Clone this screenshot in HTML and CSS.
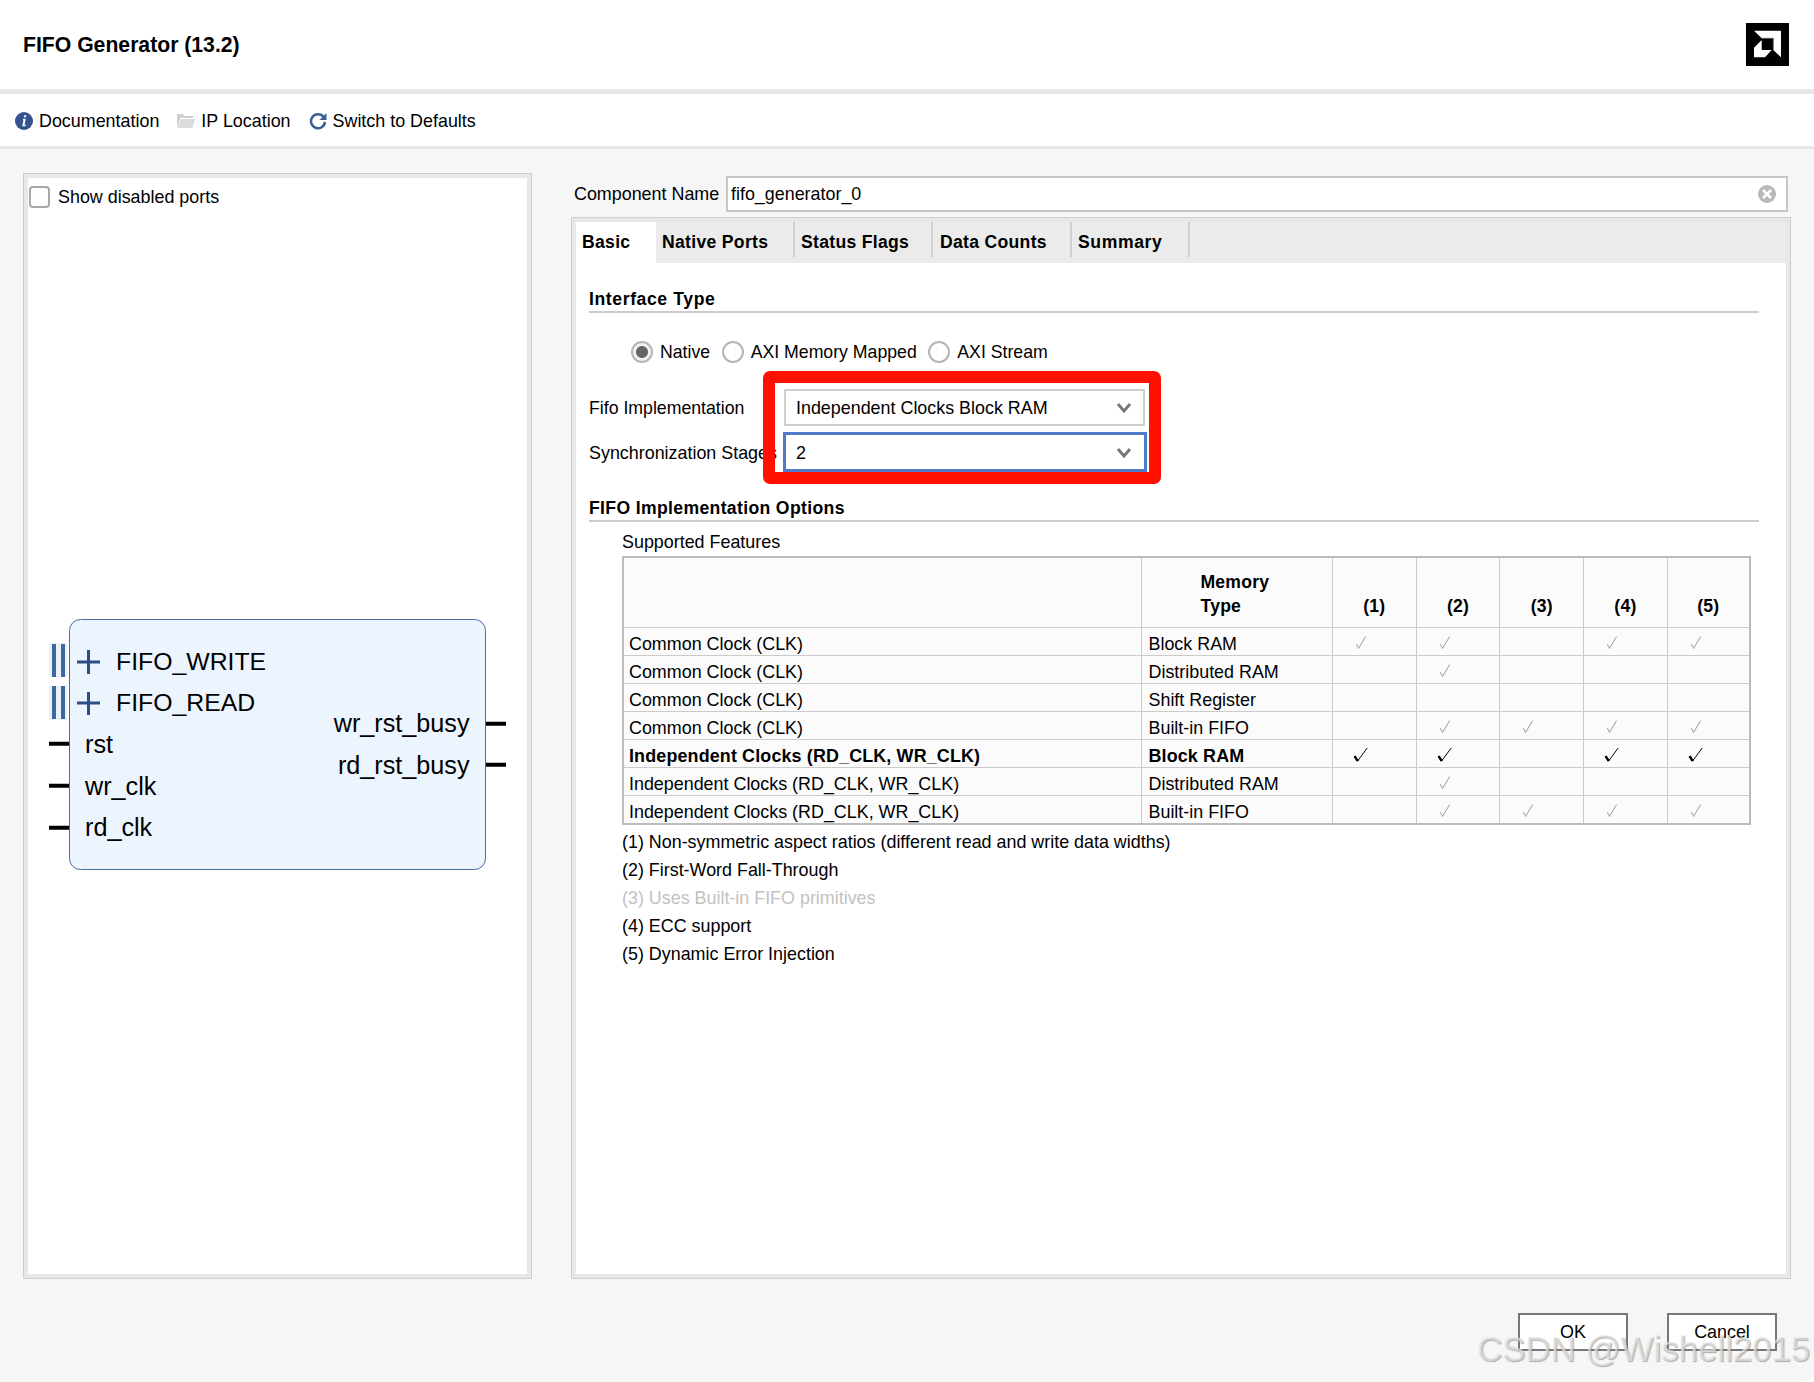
FILE: index.html
```html
<!DOCTYPE html>
<html lang="en">
<head>
<meta charset="utf-8">
<title>FIFO Generator (13.2)</title>
<link rel="stylesheet" href="styles.css">
</head>
<body>
<svg class="defs" width="0" height="0" aria-hidden="true">
  <symbol id="chk" viewBox="0 0 16 16"><path d="M3.4 9.2 5.6 13.4 12.6 1.6" fill="none" stroke="currentColor" stroke-width="1"/></symbol>
  <symbol id="chkb" viewBox="0 0 16 16"><path d="M1.5 9 4.6 14 14.2 1" fill="none" stroke="currentColor" stroke-width="1"/><path d="M1.6 9.2 4.8 14.2" fill="none" stroke="currentColor" stroke-width="2.4"/></symbol>
  <symbol id="chev" viewBox="0 0 16 12"><path d="M2 2 8 9 14 2" fill="none" stroke="currentColor" stroke-width="2.8"/></symbol>
</svg>
<div class="window">
  <header class="titlebar">
    <h1 class="title">FIFO Generator (13.2)</h1>
    <svg class="logo" viewBox="0 0 43 43"><rect width="43" height="43" fill="#000"/><path d="M8 7.7H35V34.3L27.3 27V15.3H15.7Z" fill="#fff"/><path d="M15.7 17V27H25.7L19 34.3H8V24.7Z" fill="#fff"/><path d="M15.7 15.3H27.3V27" fill="none" stroke="#666" stroke-width=".8"/></svg>
  </header>
  <nav class="toolbar">
    <span class="tool"><svg class="tool-icon" viewBox="0 0 18 18"><circle cx="9" cy="9" r="9" fill="#34528c"/><path d="M9.2 3.2h2.2l-.4 2.1H8.800ZM8.300 6.800h2.500l-1.300 6h1.300l-.3 1.400H7.200l1.300-6H7.900Z" fill="#fff"/></svg>Documentation</span>
    <span class="tool"><svg class="tool-icon" viewBox="0 0 18 18"><path d="M0 2h6l1.500 2H16v2H3.500L0 15Z" fill="#cfcfcf"/><path d="M3.800 7H18l-2.500 9H0Z" fill="#dcdcdc"/></svg>IP Location</span>
    <span class="tool"><svg class="tool-icon" viewBox="0 0 18 18"><path d="M14.600 5A7 7 0 1 0 16 10" fill="none" stroke="#3c5f94" stroke-width="2.500"/><path d="M17.500 1V8H10.500Z" fill="#3c5f94"/></svg>Switch to Defaults</span>
  </nav>
  <main class="main">
    <section class="frame left">
      <div class="frame-inner">
        <label class="show-ports"><span class="checkbox"></span>Show disabled ports</label>
        <svg class="diagram" viewBox="40 610 480 270" width="480" height="270">
          <rect class="block" x="69.500" y="619.500" width="416" height="250" rx="11"/>
          <g class="halo"><rect x="49" y="643" width="18" height="34"/><rect x="49" y="686" width="18" height="34"/></g>
          <g class="bus"><rect x="52" y="644" width="4" height="33"/><rect x="61" y="644" width="4" height="33"/><rect x="52" y="686" width="4" height="33"/><rect x="61" y="686" width="4" height="33"/></g>
          <path class="plus" d="M77 662H100M88.500 650V674M77 703H100M88.500 692V715"/>
          <path class="wire" d="M49 743.700H69M49 785.700H69M49 827.700H69M486 723.700H506M486 764.700H506"/>
          <text class="port" x="116" y="670">FIFO_WRITE</text>
          <text class="port" x="116" y="710.500">FIFO_READ</text>
          <text class="port sig" x="85" y="753">rst</text>
          <text class="port sig" x="85" y="795">wr_clk</text>
          <text class="port sig" x="85" y="836">rd_clk</text>
          <text class="port sig end" x="469.500" y="732">wr_rst_busy</text>
          <text class="port sig end" x="469.500" y="773.500">rd_rst_busy</text>
        </svg>
      </div>
    </section>
    <section class="right">
      <div class="name-row">
        <label class="name-label">Component Name</label>
        <div class="name-input"><span>fifo_generator_0</span>
          <svg class="clear" viewBox="0 0 18 18"><circle cx="9" cy="9" r="9" fill="#b9b9b9"/><path d="M5 5 13 13M13 5 5 13" stroke="#fff" stroke-width="2.600"/></svg>
        </div>
      </div>
      <div class="frame tabs-frame">
        <div class="frame-inner tabs-inner">
          <div class="tabbar">
            <span class="tab tab-on">Basic</span>
            <span class="tab tab-native">Native Ports</span>
            <span class="tab tab-status">Status Flags</span>
            <span class="tab tab-data">Data Counts</span>
            <span class="tab tab-summary">Summary</span>
          </div>
          <div class="tab-body">
            <h2 class="sec sec-first">Interface Type</h2>
            <div class="radios">
              <label class="radio-item"><span class="radio radio-on"></span>Native</label>
              <label class="radio-item"><span class="radio"></span>AXI Memory Mapped</label>
              <label class="radio-item"><span class="radio"></span>AXI Stream</label>
            </div>
            <div class="form">
              <div class="form-row">
                <span class="form-label">Fifo Implementation</span>
                <div class="select">Independent Clocks Block RAM<svg class="chev"><use href="#chev"/></svg></div>
              </div>
              <div class="form-row">
                <span class="form-label form-label-low">Synchronization Stages</span>
                <div class="select select-focus">2<svg class="chev"><use href="#chev"/></svg></div>
              </div>
              <div class="highlight"></div>
            </div>
            <h2 class="sec sec-second">FIFO Implementation Options</h2>
            <div class="features">
              <div class="features-title">Supported Features</div>
              <table class="grid">
                <colgroup><col class="c-clock"><col class="c-mem"><col class="c-n"><col class="c-n"><col class="c-n"><col class="c-n"><col class="c-last"></colgroup>
                <thead>
                  <tr><th></th><th class="th-mem">Memory<br>Type</th><th>(1)</th><th>(2)</th><th>(3)</th><th>(4)</th><th>(5)</th></tr>
                </thead>
                <tbody>
                  <tr><td>Common Clock (CLK)</td><td>Block RAM</td><td><svg class="ck"><use href="#chk"/></svg></td><td><svg class="ck"><use href="#chk"/></svg></td><td></td><td><svg class="ck"><use href="#chk"/></svg></td><td><svg class="ck"><use href="#chk"/></svg></td></tr>
                  <tr><td>Common Clock (CLK)</td><td>Distributed RAM</td><td></td><td><svg class="ck"><use href="#chk"/></svg></td><td></td><td></td><td></td></tr>
                  <tr><td>Common Clock (CLK)</td><td>Shift Register</td><td></td><td></td><td></td><td></td><td></td></tr>
                  <tr><td>Common Clock (CLK)</td><td>Built-in FIFO</td><td></td><td><svg class="ck"><use href="#chk"/></svg></td><td><svg class="ck"><use href="#chk"/></svg></td><td><svg class="ck"><use href="#chk"/></svg></td><td><svg class="ck"><use href="#chk"/></svg></td></tr>
                  <tr class="row-on"><td>Independent Clocks (RD_CLK, WR_CLK)</td><td>Block RAM</td><td><svg class="ck"><use href="#chkb"/></svg></td><td><svg class="ck"><use href="#chkb"/></svg></td><td></td><td><svg class="ck"><use href="#chkb"/></svg></td><td><svg class="ck"><use href="#chkb"/></svg></td></tr>
                  <tr><td>Independent Clocks (RD_CLK, WR_CLK)</td><td>Distributed RAM</td><td></td><td><svg class="ck"><use href="#chk"/></svg></td><td></td><td></td><td></td></tr>
                  <tr><td>Independent Clocks (RD_CLK, WR_CLK)</td><td>Built-in FIFO</td><td></td><td><svg class="ck"><use href="#chk"/></svg></td><td><svg class="ck"><use href="#chk"/></svg></td><td><svg class="ck"><use href="#chk"/></svg></td><td><svg class="ck"><use href="#chk"/></svg></td></tr>
                </tbody>
              </table>
              <ul class="notes">
                <li>(1) Non-symmetric aspect ratios (different read and write data widths)</li>
                <li>(2) First-Word Fall-Through</li>
                <li class="note-off">(3) Uses Built-in FIFO primitives</li>
                <li>(4) ECC support</li>
                <li>(5) Dynamic Error Injection</li>
              </ul>
            </div>
          </div>
        </div>
      </div>
    </section>
  </main>
  <footer class="footer">
    <button class="btn">OK</button>
    <button class="btn">Cancel</button>
  </footer>
  <div class="watermark">CSDN @Wishell2015</div>
</div>
</body>
</html>
```
FILE: styles.css
```css
* { box-sizing: border-box; }
html, body { margin: 0; padding: 0; background: #fff; }
body { font-family: "Liberation Sans", Arial, sans-serif; font-size: 17.9px; color: #000; }
.defs { position: absolute; }
.window { position: relative; width: 1814px; height: 1382px; display: flex; flex-direction: column; background: #f6f6f6; border-bottom-right-radius: 10px; overflow: hidden; }

.titlebar { height: 94px; flex: none; background: #fff; border-bottom: 5px solid #e6e6e6; display: flex; align-items: flex-start; justify-content: space-between; padding: 23px 25px 0 23px; }
.title { margin: 10px 0 0; font-size: 21.2px; line-height: 24px; font-weight: 700; }
.logo { width: 43px; height: 43px; display: block; }

.toolbar { height: 55px; flex: none; background: #fff; border-bottom: 3px solid #e6e6e6; display: flex; align-items: center; padding: 1px 0 0 15px; gap: 18px; }
.tool { display: flex; align-items: center; gap: 6px; line-height: 22px; }
.tool-icon { width: 18px; height: 18px; flex: none; }

.main { height: 1130px; flex: none; display: flex; gap: 39px; padding: 24px 23px 0; }
.frame { border: 1px solid #cdcdcd; background: #e8e8e8; padding: 4px; }
.frame-inner { background: #fff; height: 100%; }
.left { width: 509px; height: 1106px; flex: none; }

.show-ports { display: flex; align-items: center; gap: 8px; padding: 8px 1px 0 1px; line-height: 22px; }
.checkbox { width: 21px; height: 22px; background: #fff; border: 2px solid #a8a8a8; border-radius: 4px; flex: none; }
.diagram { display: block; margin: 402px 0 0 12px; }
.block { fill: #ecf4fe; stroke: #4a6ca6; stroke-width: 1; }
.halo rect { fill: #eaf1f9; }
.bus rect { fill: #3d6a9e; }
.plus { fill: none; stroke: #2d4d86; stroke-width: 3; }
.wire { fill: none; stroke: #000; stroke-width: 4; }
.port { font-family: "Liberation Sans", Arial, sans-serif; font-size: 24.8px; fill: #000; }
.sig { font-size: 25.2px; }
.end { text-anchor: end; }

.right { flex: 1; display: flex; flex-direction: column; height: 1106px; }
.name-row { flex: none; display: flex; align-items: center; height: 44px; padding: 3px 3px 5px; }
.name-label { width: 152px; flex: none; line-height: 22px; white-space: nowrap; }
.name-input { flex: 1; height: 36px; background: #fff; border: 2px solid #c6c6c6; display: flex; align-items: center; justify-content: space-between; padding: 0 10px 0 3px; }
.clear { width: 18px; height: 18px; }

.tabs-frame { flex: 1; min-height: 0; }
.tabs-inner { display: flex; flex-direction: column; }
.tabbar { height: 41px; flex: none; background: #ebebeb; display: flex; align-items: flex-start; font-size: 17.6px; font-weight: 700; letter-spacing: .3px; }
.tab { height: 35px; padding: 9px 0 0 6px; line-height: 22px; border-right: 2px solid #d0d0d0; }
.tab-on { height: 41px; width: 80px; background: #fff; border-right: 0; }
.tab-native { width: 139px; }
.tab-status { width: 138px; }
.tab-data { width: 139px; padding-left: 7px; }
.tab-summary { width: 118px; letter-spacing: .6px; }

.tab-body { padding: 0 27px 0 13px; }
.sec { margin: 0; font-size: 17.6px; line-height: 22px; font-weight: 700; letter-spacing: .35px; padding-bottom: 1px; border-bottom: 2px solid #cccccc; }
.sec-first { margin-top: 25px; letter-spacing: .6px; }
.sec-second { margin-top: 25px; }

.radios { display: flex; gap: 11.500px; margin: 27px 0 0 42px; height: 23px; font-size: 17.7px; }
.radio-item { display: flex; align-items: center; gap: 7px; line-height: 24px; }
.radio { width: 22px; height: 22px; border: 2px solid #b5b5b5; border-radius: 50%; background: #fff; flex: none; display: flex; align-items: center; justify-content: center; }
.radio-on { background: radial-gradient(circle, #666 0 5.500px, #f2f2f2 6.500px); }

.form { position: relative; margin-top: 26px; display: flex; flex-direction: column; gap: 6px; }
.form-row { display: flex; align-items: center; }
.form-label { width: 195px; flex: none; font-size: 17.7px; line-height: 22px; white-space: nowrap; }
.form-label-low { padding-top: 2px; font-size: 17.9px; }
.select { width: 361px; height: 37px; background: #fff; border: 2px solid #cfcfcf; display: flex; align-items: center; justify-content: space-between; padding: 1px 11px 0 10px; }
.select-focus { width: 364px; height: 40px; margin-left: -1px; border: 3px solid #4f7bc9; padding: 2px 12px 0 10px; }
.chev { width: 16px; height: 12px; color: #777; flex: none; }
.highlight { position: absolute; left: 174px; top: -18px; width: 398px; height: 113px; border: 12px solid #ff1100; border-radius: 7px; pointer-events: none; }

.features { margin: 9px 0 0 33px; }
.features-title { line-height: 22px; }
.grid { width: 1127px; table-layout: fixed; border-collapse: collapse; margin-top: 3px; border: 2px solid #bcbcbc; background: #fbfbfb; }
.c-clock { width: 518px; }
.c-mem { width: 191.500px; }
.c-n { width: 83.700px; }
.c-last { width: 82.700px; }
.grid th, .grid td { border: 1px solid #cbcbcb; padding: 0; white-space: nowrap; }
.grid th { height: 70px; vertical-align: bottom; padding-bottom: 9px; font-size: 17.6px; line-height: 24px; font-weight: 700; letter-spacing: .2px; text-align: center; }
.grid th.th-mem { text-align: left; padding-left: 59px; }
.grid td { height: 28px; line-height: 22px; padding: 5px 0 0 5px; vertical-align: middle; }
.grid td:nth-child(2) { padding-left: 7px; }
.grid td:nth-child(n+3) { padding: 3px 0 0 20px; }
.row-on td { font-weight: 700; letter-spacing: .15px; }
.ck { width: 16px; height: 16px; display: block; color: #9a9a9a; }
.row-on .ck { color: #000; }

.notes { list-style: none; margin: 3px 0 0; padding: 0; }
.notes li { line-height: 28px; }
.note-off { color: #c2c2c2; }

.footer { flex: 1; display: flex; justify-content: flex-end; gap: 39px; padding: 34px 37px 0 0; }
.btn { width: 110px; height: 38px; background: #fff; border: 2px solid #777; border-radius: 0; font: inherit; color: #000; padding: 0; }

.watermark { position: absolute; left: 1477px; top: 1329px; font-size: 34.800px; line-height: 40px; white-space: nowrap; color: rgba(232, 232, 232, .7); text-shadow: 1px 1px 1px rgba(120, 120, 120, .6); pointer-events: none; }
```
